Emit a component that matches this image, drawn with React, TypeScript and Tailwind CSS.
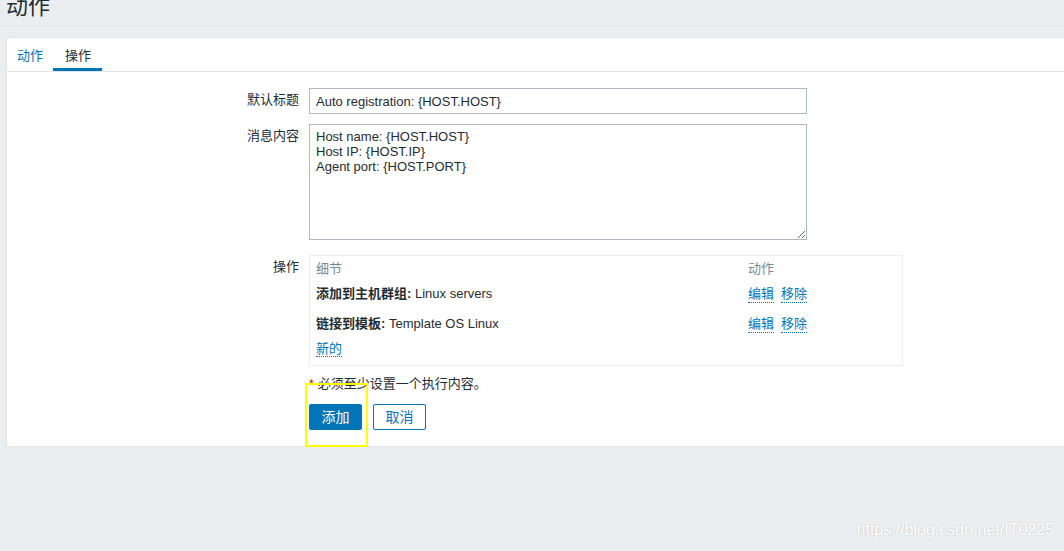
import { useState } from "react";

const font = { fontFamily: '"Liberation Sans", Arial, "Noto Sans CJK SC", sans-serif' };

const rows = [
  { label: "添加到主机群组:", value: "Linux servers" },
  { label: "链接到模板:", value: "Template OS Linux" },
];

const App = () => {
  const [subject, setSubject] = useState("Auto registration: {HOST.HOST}");
  const [message, setMessage] = useState(
    "Host name: {HOST.HOST}\nHost IP: {HOST.IP}\nAgent port: {HOST.PORT}"
  );

  return (
    <div className="min-h-[551px] w-[1064px] overflow-hidden bg-[#ebeef0] text-[#1f2c33] relative" style={font}>
      {/* header */}
      <div className="h-[26px] border-b border-[#dfe4e7] relative overflow-hidden">
        <h1 className="absolute left-[6px] top-[-8px] text-[22px] leading-[30px] text-[#1f2c33]">动作</h1>
      </div>

      {/* card */}
      <div className="mt-[11px] ml-[6px] bg-white border border-[#dfe4e7] border-r-0 h-[410px]">
        {/* tabs */}
        <div className="flex h-[34px] border-b border-[#dfe4e7] text-[13px]">
          <div className="pl-[10px] pr-[10px] pt-[8px] text-[#0275b8]">动作</div>
          <div className="pl-[12px] pr-[11px] pt-[8px] border-b-[3px] border-[#0275b8] h-[33px]">操作</div>
        </div>

        {/* form */}
        <div className="pt-[16px] text-[13px]">
          <div className="flex items-start">
            <div className="w-[302px] text-right pr-[10px] pt-[3px] leading-[18px]">默认标题</div>
            <input
              value={subject}
              onChange={(e) => setSubject(e.target.value)}
              className="w-[498px] h-[26px] border border-[#acbbc2] px-[6px] text-[13px] outline-none text-[#1f2c33]"
              style={font}
            />
          </div>

          <div className="flex items-start mt-[10px]">
            <div className="w-[302px] text-right pr-[10px] pt-[3px] leading-[18px]">消息内容</div>
            <textarea
              value={message}
              onChange={(e) => setMessage(e.target.value)}
              className="w-[498px] h-[116px] border border-[#acbbc2] px-[6px] pt-[4px] text-[13px] leading-[15px] outline-none text-[#1f2c33]"
              style={font}
            />
          </div>

          <div className="flex items-start mt-[15px]">
            <div className="w-[302px] text-right pr-[10px] pt-[3px] leading-[18px]">操作</div>
            <div className="w-[594px] h-[111px] border border-[#ebeef0] px-[6px] pt-[4px]">
              <div className="flex text-[#768d99] leading-[18px]">
                <div className="w-[432px]">细节</div>
                <div>动作</div>
              </div>
              {rows.map((r, i) => (
                <div key={i} className={`flex leading-[18px] ${i === 0 ? "mt-[7px]" : "mt-[12px]"}`}>
                  <div className="w-[432px]">
                    <span className="font-bold">{r.label}</span> {r.value}
                  </div>
                  <div className="flex gap-[7px] text-[#0275b8]">
                    <span className="border-b border-dotted border-[#0275b8] leading-[17px]">编辑</span>
                    <span className="border-b border-dotted border-[#0275b8] leading-[17px]">移除</span>
                  </div>
                </div>
              ))}
              <div className="mt-[6px] text-[#0275b8]">
                <span className="border-b border-dotted border-[#0275b8] leading-[17px]">新的</span>
              </div>
            </div>
          </div>

          <div className="ml-[302px] mt-[9px] leading-[18px] text-[13px]">
            <span className="text-[#d40000] text-[12px] mr-[4px]">*</span>必须至少设置一个执行内容。
          </div>

          <div className="ml-[302px] mt-[11px] flex gap-[11px] relative">
            <button className="w-[53px] h-[26px] bg-[#0275b8] text-white text-[14px] rounded-[2px]">添加</button>
            <button className="w-[53px] h-[26px] border border-[#0275b8] text-[#0275b8] text-[14px] rounded-[2px] bg-white">取消</button>
            <div className="absolute left-[-4px] top-[-21px] w-[63px] h-[64px] border-2 border-[#ffff00] pointer-events-none" />
          </div>
        </div>
      </div>

      <div className="absolute right-[10px] bottom-[9px] text-[16px] text-white" style={{ textShadow: "0 0 2px rgba(0,0,0,0.2)" }}>
        https://blog.csdn.net/IT0225
      </div>
    </div>
  );
};

export default App;
